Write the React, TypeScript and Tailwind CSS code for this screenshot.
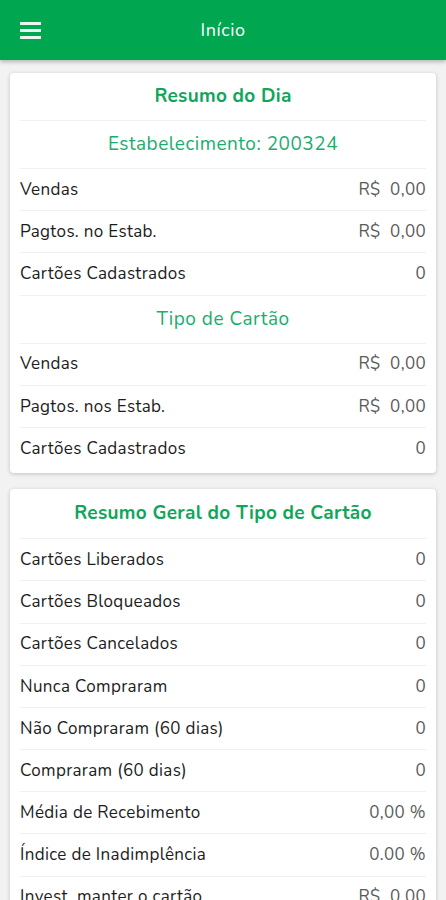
import React from 'react'

type Row = { label: string; value: string }

const font = { fontFamily: '"Nunito", "Open Sans", "Liberation Sans", sans-serif' }

const StatRow = ({ label, value, last }: Row & { last?: boolean }) => (
  <div className={`flex items-center justify-between h-[42.2px] tracking-[0.35px] ${last ? '' : 'border-b border-[#f0f0f0]'}`}>
    <span className='text-[17px] text-[#1c1c1c]'>{label}</span>
    <span className='text-[17px] text-[#5a5a5a]'>{value}</span>
  </div>
)

const SectionTitle = ({ children, bold, tall }: { children: React.ReactNode; bold?: boolean; tall?: boolean }) => (
  <div
    className={`flex items-center justify-center border-b border-[#f0f0f0] text-[19px] ${tall ? 'h-[50px]' : 'h-[48px]'} ${
      bold ? 'font-bold tracking-[0.3px] text-[#10a65a]' : 'tracking-[0.5px] text-[#1aad6e]'
    }`}
  >
    {children}
  </div>
)

const daily: Row[] = [
  { label: 'Vendas', value: 'R$  0,00' },
  { label: 'Pagtos. no Estab.', value: 'R$  0,00' },
  { label: 'Cartões Cadastrados', value: '0' },
]

const tipo: Row[] = [
  { label: 'Vendas', value: 'R$  0,00' },
  { label: 'Pagtos. nos Estab.', value: 'R$  0,00' },
  { label: 'Cartões Cadastrados', value: '0' },
]

const geral: Row[] = [
  { label: 'Cartões Liberados', value: '0' },
  { label: 'Cartões Bloqueados', value: '0' },
  { label: 'Cartões Cancelados', value: '0' },
  { label: 'Nunca Compraram', value: '0' },
  { label: 'Não Compraram (60 dias)', value: '0' },
  { label: 'Compraram (60 dias)', value: '0' },
  { label: 'Média de Recebimento', value: '0,00 %' },
  { label: 'Índice de Inadimplência', value: '0.00 %' },
  { label: 'Invest. manter o cartão', value: 'R$  0,00' },
]

export default function App() {
  return (
    <div className='min-h-[900px] bg-[#f2f2f2] whitespace-pre' style={font}>
      <header className='relative flex items-center justify-center h-[60px] bg-[#00a650] shadow-[0_2px_4px_rgba(0,0,0,0.25)]'>
        <button className='absolute left-[20px] top-[22px] flex flex-col gap-[4px]'>
          <span className='block w-[21px] h-[3px] bg-[#e8f8ee]' />
          <span className='block w-[21px] h-[3px] bg-[#e8f8ee]' />
          <span className='block w-[21px] h-[3px] bg-[#e8f8ee]' />
        </button>
        <h1 className='text-white text-[18px] tracking-[0.6px]'>Início</h1>
      </header>

      <main className='flex flex-col gap-[16px] px-[10px] pt-[13px]'>
        <section className='bg-white rounded-[4px] shadow-[0_1px_4px_rgba(0,0,0,0.2)] px-[10px] pb-[3px]'>
          <SectionTitle bold>Resumo do Dia</SectionTitle>
          <SectionTitle>Estabelecimento: 200324</SectionTitle>
          {daily.map((r) => <StatRow key={r.label} {...r} />)}
          <SectionTitle>Tipo de Cartão</SectionTitle>
          {tipo.map((r, i) => <StatRow key={r.label} {...r} last={i === tipo.length - 1} />)}
        </section>

        <section className='bg-white rounded-[4px] shadow-[0_1px_4px_rgba(0,0,0,0.2)] px-[10px]'>
          <SectionTitle bold tall>Resumo Geral do Tipo de Cartão</SectionTitle>
          {geral.map((r) => <StatRow key={r.label} {...r} />)}
        </section>
      </main>
    </div>
  )
}
